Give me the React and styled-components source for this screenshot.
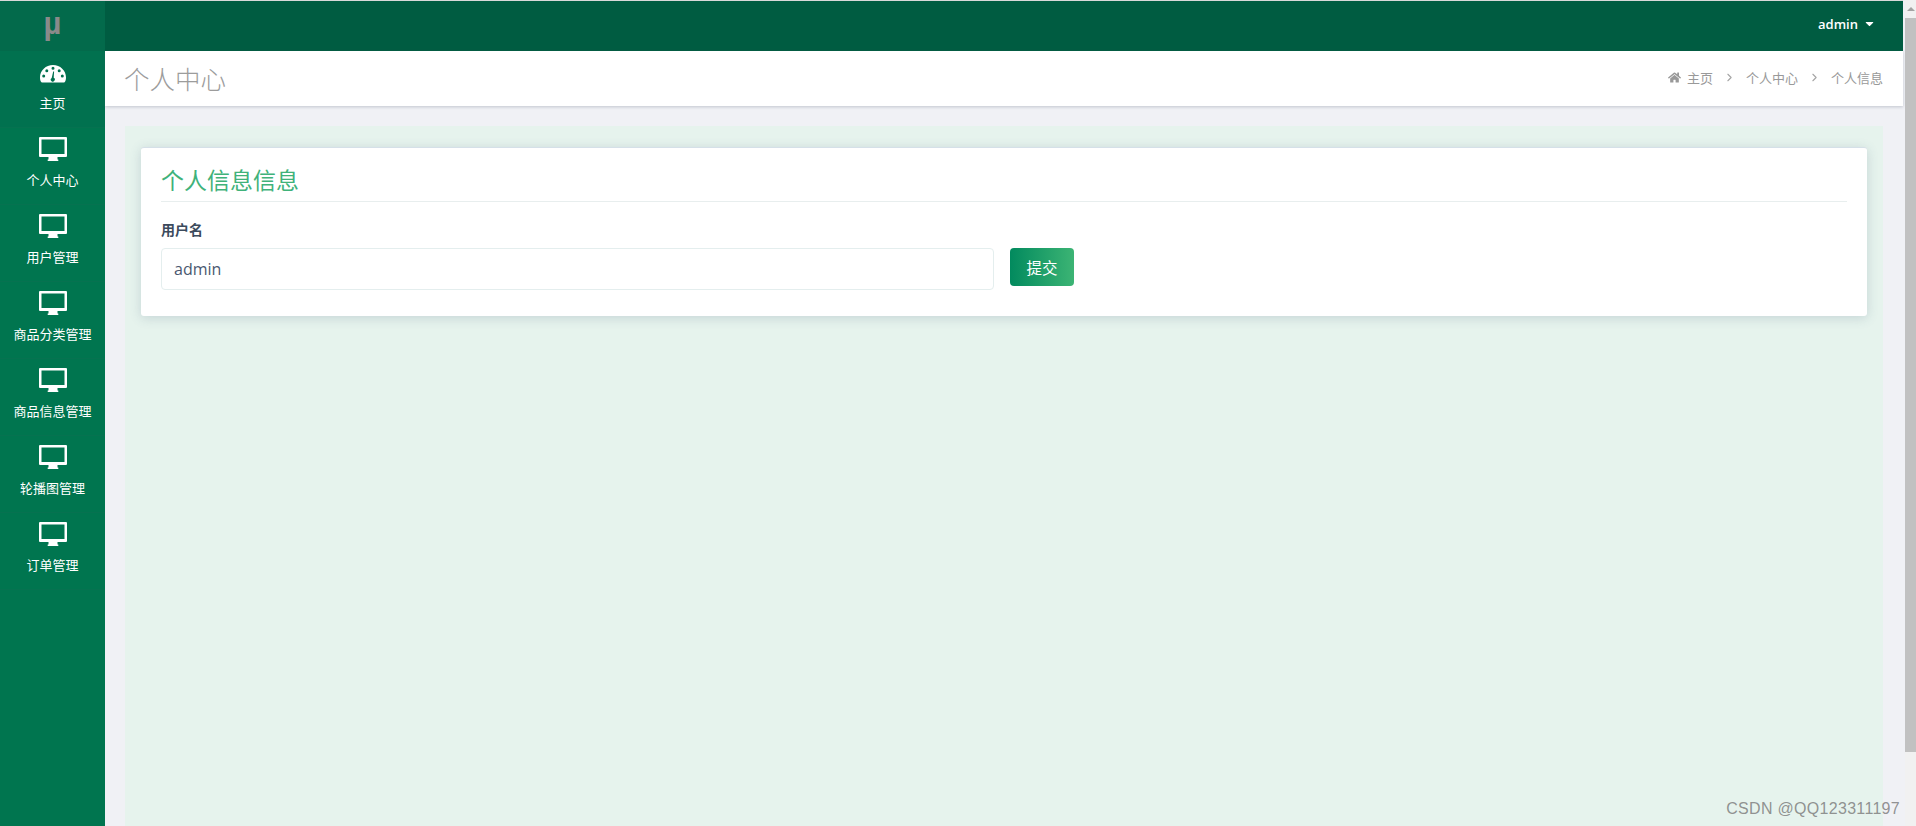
import React from 'react';
import styled, { createGlobalStyle } from 'styled-components';
import { FaHome, FaCaretDown } from 'react-icons/fa';
import { ChevronRight } from 'lucide-react';

const Global = createGlobalStyle`
  html, body { margin: 0; padding: 0; height: 100%; overflow: hidden; }
  body { font-family: "Open Sans", "Noto Sans CJK SC", sans-serif; background: #f0f1f5; }
  * { box-sizing: border-box; }
`;

const Page = styled.div`
  position: relative;
  display: flex;
  width: 1916px;
  height: 826px;
  overflow: hidden;
  background: #f0f1f5;
`;

const Shell = styled.div`
  flex: 1;
  display: flex;
  min-width: 0;
  padding-top: 1px;
  background: #d9d9d9;
`;

const Sidebar = styled.aside`
  width: 105px;
  flex: none;
  display: flex;
  flex-direction: column;
  background: #00754f;
`;

const Logo = styled.div`
  height: 50px;
  flex: none;
  display: flex;
  align-items: center;
  justify-content: center;
  padding-bottom: 4px;
  background: #036a4b;
  color: #8a8a8a;
  font: bold 31px "Liberation Sans", sans-serif;
`;

const NavItem = styled.a`
  height: 77px;
  flex: none;
  display: flex;
  flex-direction: column;
  align-items: center;
  padding-top: 9px;
  border-bottom: 1px solid #067250;
  color: #fff;
  font-size: 13px;
  line-height: 18px;
  background: ${p => (p.$active ? '#01714f' : 'transparent')};
`;

const NavIcon = styled.svg`
  width: 28px;
  height: 24px;
  margin-bottom: 10px;
  fill: #fff;
`;

const Main = styled.div`
  flex: 1;
  min-width: 0;
  display: flex;
  flex-direction: column;
  background: #f0f1f5;
`;

const Topbar = styled.header`
  height: 50px;
  flex: none;
  display: flex;
  align-items: center;
  justify-content: flex-end;
  padding: 0 27px 5px 0;
  background: #005c41;
  color: #fff;
  font-size: 13px;
  font-weight: 600;
`;

const User = styled.span`
  display: flex;
  align-items: center;
  gap: 5px;
`;

const TitleBar = styled.div`
  height: 55px;
  flex: none;
  display: flex;
  align-items: center;
  justify-content: space-between;
  padding: 0 20px 3px 19px;
  background: #fff;
  box-shadow: 0 1px 3px rgba(80, 90, 110, 0.28);
`;

const PageTitle = styled.h1`
  margin: 0;
  font-size: 25.5px;
  font-weight: 300;
  color: #9c9c9c;
`;

const Crumbs = styled.nav`
  display: flex;
  align-items: center;
  font-size: 13px;
  color: #999;
`;

const Crumb = styled.span`
  display: flex;
  align-items: center;
  gap: 6px;
`;

const Sep = styled(ChevronRight)`
  margin: 0 10px;
  width: 13px;
  height: 13px;
  color: #a5a5a5;
`;

const Content = styled.main`
  flex: 1;
  min-height: 0;
  padding: 20px 20px 0;
`;

const Panel = styled.section`
  height: 100%;
  padding: 21px 16px 0;
  background: #e6f3ed;
`;

const Card = styled.div`
  height: 169px;
  padding: 15px 20px 0;
  background: #fff;
  border-radius: 3px;
  border-top: 1px solid #d5e0e8;
  box-shadow: 0 2px 12px rgba(60, 90, 120, 0.2);
`;

const CardTitle = styled.h2`
  margin: 0 0 19px;
  padding: 1px 0 5px;
  height: 39px;
  font-size: 23px;
  line-height: 32px;
  font-weight: 400;
  color: #3fb27a;
  border-bottom: 1px solid #e8eeee;
`;

const Label = styled.label`
  display: block;
  margin-bottom: 9px;
  font-size: 14px;
  line-height: 18px;
  font-weight: 700;
  color: #3b4a5c;
`;

const FormRow = styled.div`
  display: flex;
  align-items: flex-start;
  gap: 16px;
`;

const Field = styled.input`
  width: 833px;
  height: 42px;
  padding: 0 12px;
  border: 1px solid #e4eeee;
  border-radius: 4px;
  background: #fff;
  color: #4a5870;
  font: 16px "Open Sans", sans-serif;
  outline: none;
`;

const Submit = styled.button`
  width: 64px;
  height: 38px;
  border: 0;
  border-radius: 4px;
  background: linear-gradient(90deg, #028a5e, #3cb474);
  color: #fff;
  font: 15.5px "Open Sans", "Noto Sans CJK SC", sans-serif;
`;

const Track = styled.div`
  width: 11px;
  margin-left: 2px;
  flex: none;
  display: flex;
  flex-direction: column;
  align-items: center;
  background: #f1f1f1;
`;

const Arrow = styled.div`
  margin: 7px 0 7px;
  width: 0;
  height: 0;
  border-left: 4px solid transparent;
  border-right: 4px solid transparent;
  border-bottom: 4px solid #a3a3a3;
`;

const Thumb = styled.div`
  width: 100%;
  height: 734px;
  background: #c1c1c1;
`;

const Mark = styled.div`
  position: absolute;
  right: 16px;
  bottom: 8px;
  font: 16px "Liberation Sans", sans-serif;
  letter-spacing: 0.3px;
  color: rgba(120, 120, 120, 0.8);
`;

// Monitor with a thin bezel and a short flared stand
const Desktop = () => (
  <NavIcon viewBox="0 0 28 24">
    <path
      fillRule="evenodd"
      d="M1 0h26a1 1 0 0 1 1 1v18a1 1 0 0 1-1 1h-8.500v2.500h.8V24H8.700v-1.500h.8V20H1a1 1 0 0 1-1-1V1a1 1 0 0 1 1-1zM2.500 2.500v14.500h23V2.500z"
    />
  </NavIcon>
);

// Half-dial speedometer with five marks and a needle
const Gauge = () => (
  <NavIcon viewBox="0 0 28 24">
    <path
      fillRule="evenodd"
      d="M14 5C6.800 5 1 10.500 1 17.500c0 1.800.4 3.200 1 4.300.2.400.6.700 1 .7h22c.4 0 .8-.3 1-.7.6-1.100 1-2.500 1-4.300C27 10.500 21.200 5 14 5zM14 6.800a1.500 1.500 0 1 1 0 3 1.500 1.500 0 0 1 0-3zM7.800 9.300a1.500 1.500 0 1 1 0 3 1.500 1.500 0 0 1 0-3zM20.200 9.300a1.500 1.500 0 1 1 0 3 1.500 1.500 0 0 1 0-3zM4.700 14.500a1.500 1.500 0 1 1 0 3 1.500 1.500 0 0 1 0-3zM23.300 14.500a1.500 1.500 0 1 1 0 3 1.500 1.500 0 0 1 0-3zM15.100 11.500l-.4 6.300a2 2 0 1 1-2 .1l1.500-6.500z"
    />
  </NavIcon>
);

const items = ['个人中心', '用户管理', '商品分类管理', '商品信息管理', '轮播图管理', '订单管理'];

export default function App() {
  return (
    <Page>
      <Global />
      <Shell>
        <Sidebar>
          <Logo>µ</Logo>
          <NavItem $active>
            <Gauge />
            主页
          </NavItem>
          {items.map(name => (
            <NavItem key={name}>
              <Desktop />
              {name}
            </NavItem>
          ))}
        </Sidebar>
        <Main>
          <Topbar>
            <User>
              admin
              <FaCaretDown size={13} />
            </User>
          </Topbar>
          <TitleBar>
            <PageTitle>个人中心</PageTitle>
            <Crumbs>
              <Crumb>
                <FaHome size={13} />
                主页
              </Crumb>
              <Sep />
              <Crumb>个人中心</Crumb>
              <Sep />
              <Crumb>个人信息</Crumb>
            </Crumbs>
          </TitleBar>
          <Content>
            <Panel>
              <Card>
                <CardTitle>个人信息信息</CardTitle>
                <Label>用户名</Label>
                <FormRow>
                  <Field defaultValue="admin" />
                  <Submit>提交</Submit>
                </FormRow>
              </Card>
            </Panel>
          </Content>
        </Main>
      </Shell>
      <Track>
        <Arrow />
        <Thumb />
      </Track>
      <Mark>CSDN @QQ123311197</Mark>
    </Page>
  );
}
